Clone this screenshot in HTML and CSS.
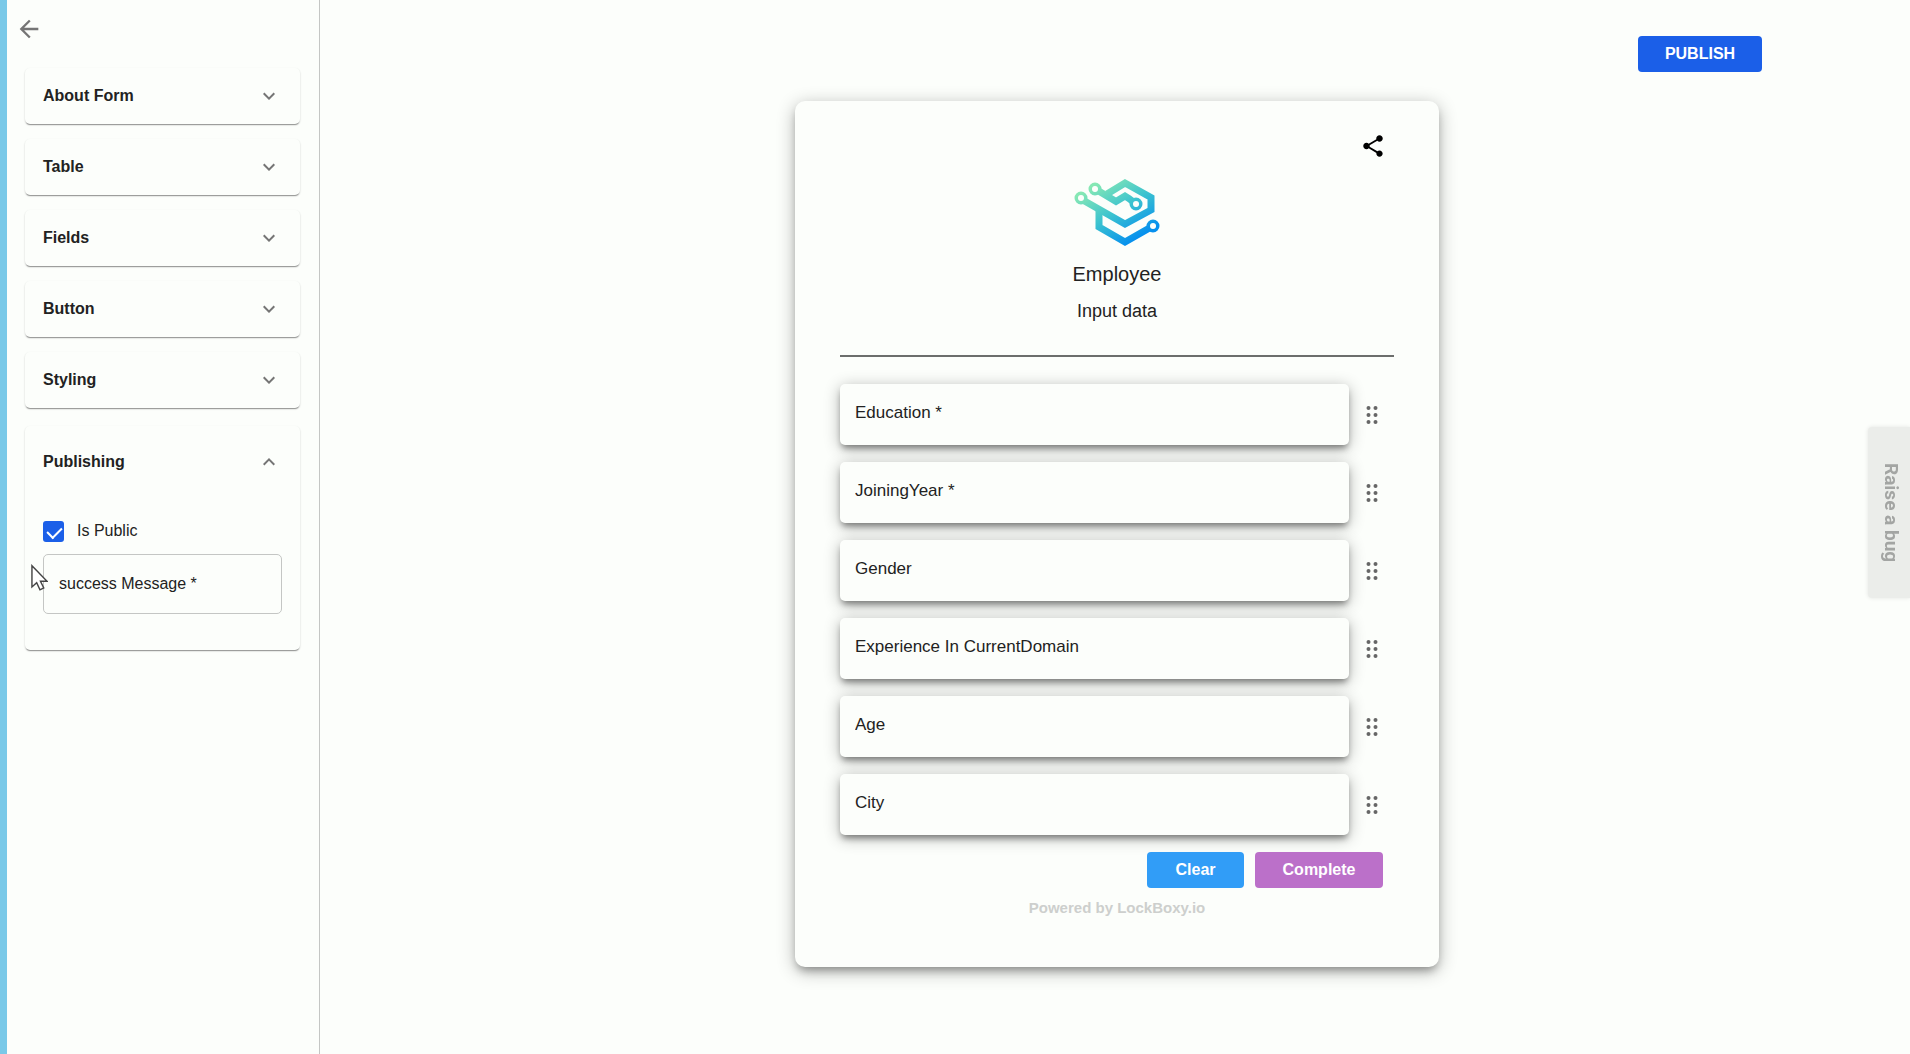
FILE: index.html
```html
<!DOCTYPE html>
<html lang="en">
<head>
    <meta charset="UTF-8">
    <meta name="viewport" content="width=device-width, initial-scale=1.0">
    <title>Form Builder</title>
    <link rel="stylesheet" href="styles.css">
</head>
<body>

<aside class="sidebar">
    <a class="back" href="#" aria-label="Back">
        <svg width="28" height="28" viewBox="0 0 24 24"><path d="M20 11H7.83l5.59-5.59L12 4l-8 8 8 8 1.41-1.41L7.83 13H20v-2z"/></svg>
    </a>

    <button class="panel panel-head" type="button">About Form
        <svg class="chevron" viewBox="0 0 24 24"><path d="M16.59 8.59 12 13.17 7.41 8.59 6 10l6 6 6-6z"/></svg>
    </button>
    <button class="panel panel-head" type="button">Table
        <svg class="chevron" viewBox="0 0 24 24"><path d="M16.59 8.59 12 13.17 7.41 8.59 6 10l6 6 6-6z"/></svg>
    </button>
    <button class="panel panel-head" type="button">Fields
        <svg class="chevron" viewBox="0 0 24 24"><path d="M16.59 8.59 12 13.17 7.41 8.59 6 10l6 6 6-6z"/></svg>
    </button>
    <button class="panel panel-head" type="button">Button
        <svg class="chevron" viewBox="0 0 24 24"><path d="M16.59 8.59 12 13.17 7.41 8.59 6 10l6 6 6-6z"/></svg>
    </button>
    <button class="panel panel-head" type="button">Styling
        <svg class="chevron" viewBox="0 0 24 24"><path d="M16.59 8.59 12 13.17 7.41 8.59 6 10l6 6 6-6z"/></svg>
    </button>

    <section class="panel panel-open">
        <button class="panel-head" type="button" aria-expanded="true">Publishing
            <svg class="chevron" viewBox="0 0 24 24"><path d="M12 8l-6 6 1.41 1.41L12 10.83l4.59 4.58L18 14z"/></svg>
        </button>
        <div class="panel-body">
            <label class="check"><input type="checkbox" checked> Is Public</label>
            <input class="message" type="text" placeholder="success Message *" aria-label="success Message">
        </div>
    </section>
</aside>

<main class="content">
    <button class="btn publish" type="button">PUBLISH</button>

    <form class="form-card">
        <button class="share" type="button" aria-label="Share">
            <svg width="26" height="26" viewBox="0 0 24 24"><path d="M18 16.08c-.76 0-1.44.3-1.96.77L8.91 12.7c.05-.23.09-.46.09-.7s-.04-.47-.09-.7l7.05-4.11c.54.5 1.25.81 2.04.81 1.66 0 3-1.34 3-3s-1.34-3-3-3-3 1.34-3 3c0 .24.04.47.09.7L8.04 9.81C7.5 9.31 6.79 9 6 9c-1.66 0-3 1.34-3 3s1.34 3 3 3c.79 0 1.5-.31 2.04-.81l7.12 4.16c-.05.21-.08.43-.08.65 0 1.61 1.31 2.92 2.92 2.92s2.92-1.31 2.92-2.92-1.31-2.92-2.92-2.92z"/></svg>
        </button>

        <header class="form-header">
            <svg class="logo" width="84" height="70" viewBox="0 0 84 70" fill="none">
                <defs>
                    <linearGradient id="brand" gradientUnits="userSpaceOnUse" x1="16" y1="8" x2="52" y2="66">
                        <stop offset="0" stop-color="#86e8b4"/>
                        <stop offset="0.5" stop-color="#3cc3cf"/>
                        <stop offset="1" stop-color="#0690ee"/>
                    </linearGradient>
                </defs>
                <g stroke="url(#brand)" stroke-linejoin="miter">
                    <path stroke-width="7" d="M22 11 41 22.500 50 17 54 19.500 61 25"/>
                    <path stroke-width="7" d="M32 15 50 4 76 18.500V31L50 45 6 20"/>
                    <path stroke-width="7" d="M24 29V48L50 63 78 47"/>
                    <circle cx="20" cy="10" r="4.500" stroke-width="4"/>
                    <circle cx="6" cy="19" r="4.500" stroke-width="4"/>
                    <circle cx="61" cy="25" r="4.500" stroke-width="4"/>
                    <circle cx="78" cy="47" r="4.500" stroke-width="4"/>
                </g>
                <g fill="#fcfefb">
                    <circle cx="20" cy="10" r="3"/>
                    <circle cx="6" cy="19" r="3"/>
                    <circle cx="61" cy="25" r="3"/>
                    <circle cx="78" cy="47" r="3"/>
                </g>
            </svg>
            <h1>Employee</h1>
            <p>Input data</p>
        </header>

        <div class="fields">
            <div class="row">
                <input type="text" placeholder="Education *" aria-label="Education">
                <svg class="drag" viewBox="0 0 12 20"><use href="#dots"/></svg>
            </div>
            <div class="row">
                <input type="text" placeholder="JoiningYear *" aria-label="JoiningYear">
                <svg class="drag" viewBox="0 0 12 20"><use href="#dots"/></svg>
            </div>
            <div class="row">
                <input type="text" placeholder="Gender" aria-label="Gender">
                <svg class="drag" viewBox="0 0 12 20"><use href="#dots"/></svg>
            </div>
            <div class="row">
                <input type="text" placeholder="Experience In CurrentDomain" aria-label="Experience In CurrentDomain">
                <svg class="drag" viewBox="0 0 12 20"><use href="#dots"/></svg>
            </div>
            <div class="row">
                <input type="text" placeholder="Age" aria-label="Age">
                <svg class="drag" viewBox="0 0 12 20"><use href="#dots"/></svg>
            </div>
            <div class="row">
                <input type="text" placeholder="City" aria-label="City">
                <svg class="drag" viewBox="0 0 12 20"><use href="#dots"/></svg>
            </div>
        </div>

        <div class="actions">
            <button class="btn clear" type="reset">Clear</button>
            <button class="btn complete" type="button">Complete</button>
        </div>
        <p class="powered">Powered by LockBoxy.io</p>
    </form>
</main>

<button class="bug-tab" type="button">Raise a bug</button>

<!-- mouse pointer -->
<svg class="cursor" width="17" height="27" viewBox="0 0 18 28"><path d="M1 1.500V24l5-4.500 3.500 7.500 4-2-3.500-7H17z" fill="#fff" stroke="#444" stroke-width="1.500"/></svg>

<!-- shared drag handle -->
<svg width="0" height="0" class="sprite">
    <symbol id="dots" viewBox="0 0 12 20">
        <circle cx="2.500" cy="3" r="2"/><circle cx="9.500" cy="3" r="2"/>
        <circle cx="2.500" cy="10" r="2"/><circle cx="9.500" cy="10" r="2"/>
        <circle cx="2.500" cy="17" r="2"/><circle cx="9.500" cy="17" r="2"/>
    </symbol>
</svg>

</body>
</html>
```
FILE: styles.css
```css
* {
    box-sizing: border-box;
}

body {
    margin: 0;
    min-height: 100vh;
    display: flex;
    font-family: "Liberation Sans", Arial, sans-serif;
    font-size: 16px;
    color: #222;
    background: #fcfefb;
    border-left: 7px solid #79c9e8;
}

button,
input {
    font-family: inherit;
    font-size: 16px;
    color: inherit;
}

button {
    border: none;
    background: none;
    padding: 0;
    cursor: pointer;
}

/* Sidebar */
.sidebar {
    width: 313px;
    flex-shrink: 0;
    display: flex;
    flex-direction: column;
    gap: 15px;
    padding: 15px 19px 14px 18px;
    border-right: 1px solid #c4c6c4;
}

.back {
    align-self: flex-start;
    height: 38px;
    margin-left: -10px;
    fill: #757575;
}

.panel {
    border-radius: 5px;
    background: #fcfefb;
    box-shadow: 0 2px 1px -1px rgba(0, 0, 0, 0.3), 0 1px 2px rgba(0, 0, 0, 0.2);
}

.panel-head {
    width: 100%;
    height: 56px;
    display: flex;
    align-items: center;
    justify-content: space-between;
    padding: 0 19px 0 18px;
    font-weight: bold;
    text-align: left;
}

.chevron {
    width: 24px;
    height: 24px;
    fill: #757575;
}

.panel-open {
    margin-top: 3px;
}

.panel-open .panel-head {
    height: 72px;
}

.panel-body {
    padding: 22px 18px 36px;
}

.check {
    display: flex;
    align-items: center;
    gap: 13px;
    height: 22px;
    margin-bottom: 12px;
}

.check input {
    appearance: none;
    position: relative;
    width: 21px;
    height: 21px;
    margin: 0;
    border-radius: 3px;
    background: #1b5fe8;
}

.check input:checked::after {
    content: "";
    position: absolute;
    left: 7px;
    top: 3px;
    width: 7px;
    height: 12px;
    border: solid #fff;
    border-width: 0 2px 2px 0;
    transform: rotate(45deg);
}

.message {
    display: block;
    width: 100%;
    height: 60px;
    padding: 0 15px;
    border: 1px solid #c4c6c4;
    border-radius: 5px;
    background: none;
}

input::placeholder {
    color: #222;
    opacity: 1;
}

/* Form preview */
.content {
    flex: 1;
    display: flex;
    flex-direction: column;
    align-items: center;
    padding: 36px 0 36px 4px;
}

.btn {
    height: 36px;
    border-radius: 4px;
    color: #fff;
    font-weight: bold;
}

.publish {
    align-self: flex-end;
    width: 124px;
    margin: 0 148px 29px 0;
    background: #1b5fe8;
}

.form-card {
    width: 644px;
    max-width: 100%;
    padding: 31px 45px 50px;
    border-radius: 10px;
    background: #fcfefb;
    box-shadow: 0 6px 8px -3px rgba(0, 0, 0, 0.3), 0 4px 18px rgba(0, 0, 0, 0.3);
}

.share {
    display: block;
    width: 26px;
    height: 32px;
    margin: 0 8px 0 auto;
}

.form-header {
    display: flex;
    flex-direction: column;
    align-items: center;
    padding: 15px 0 33px;
    border-bottom: 2px solid #6c6e6c;
}

.form-header h1 {
    margin: 13px 0 14px;
    font-size: 20px;
    font-weight: normal;
    line-height: 24px;
}

.form-header p {
    margin: 0;
    font-size: 18px;
    line-height: 22px;
}

.logo {
    overflow: visible;
}

.fields {
    display: flex;
    flex-direction: column;
    gap: 17px;
    margin-top: 27px;
}

.row {
    display: flex;
    align-items: center;
    gap: 17px;
    padding-right: 16px;
}

.row input {
    flex: 1;
    height: 61px;
    padding: 0 15px 4px;
    border: none;
    border-radius: 5px;
    background: #fcfefb;
    font-size: 17px;
    box-shadow: 0 5px 6px -2px rgba(0, 0, 0, 0.4), 0 3px 16px rgba(0, 0, 0, 0.3);
}

.drag {
    width: 12px;
    height: 20px;
    fill: #666;
}

.actions {
    position: relative;
    display: flex;
    justify-content: flex-end;
    gap: 11px;
    margin: 17px 11px 0 0;
}

.clear {
    width: 97px;
    background: #319df7;
}

.complete {
    width: 128px;
    background: #bb70c9;
}

.powered {
    margin: 11px 0 0;
    font-size: 15px;
    font-weight: bold;
    line-height: 18px;
    text-align: center;
    color: #cdcfcd;
}

/* Feedback tab on the right edge */
.bug-tab {
    position: fixed;
    right: 0;
    top: 427px;
    width: 42px;
    height: 171px;
    padding-left: 4px;
    border-radius: 4px 0 0 4px;
    background: #ebedea;
    box-shadow: 0 0 4px rgba(0, 0, 0, 0.1);
    color: #a3a5a3;
    font-family: Roboto, sans-serif;
    font-size: 19px;
    font-weight: bold;
    writing-mode: vertical-rl;
}

.cursor {
    position: absolute;
    left: 31px;
    top: 564px;
}

.sprite {
    position: absolute;
}
```
